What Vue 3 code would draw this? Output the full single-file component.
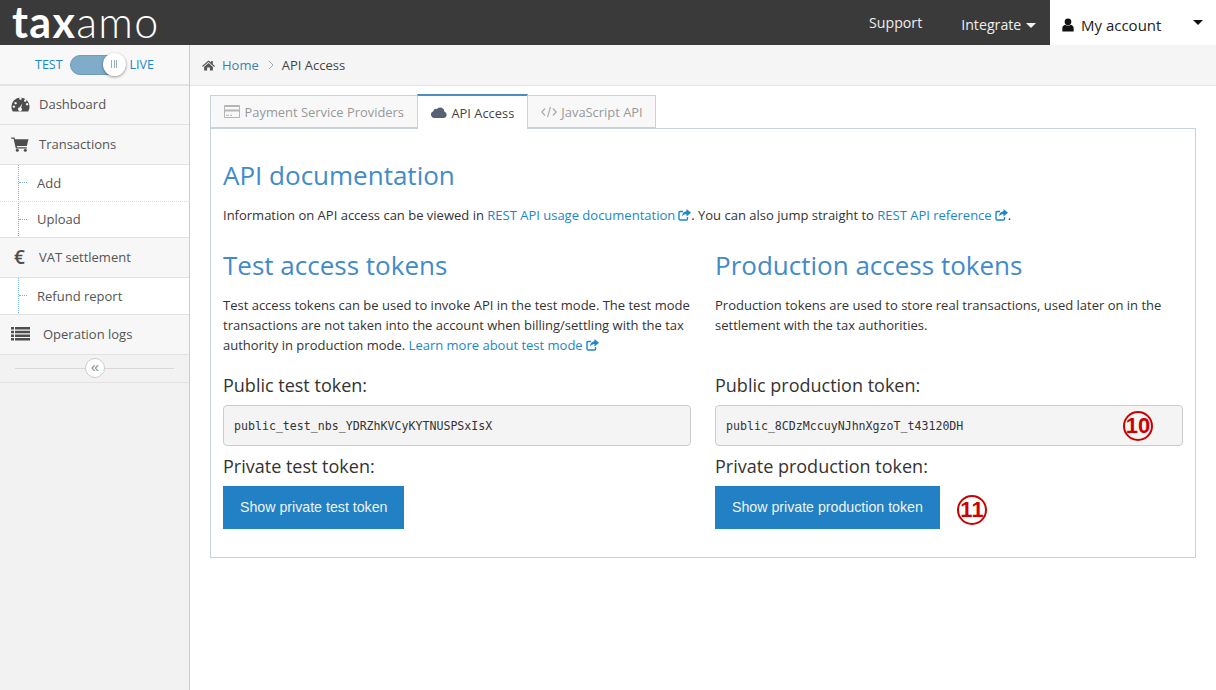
<script setup>
const tabs = [
  { label: 'Payment Service Providers', icon: 'card' },
  { label: 'API Access', icon: 'cloud', active: true },
  { label: 'JavaScript API', icon: 'code' }
]
</script>

<template>
  <div class="page">
    <header class="topbar">
      <div class="logo"><b>tax</b>amo</div>
      <nav class="topnav">
        <a class="support">Support</a>
        <a class="integrate">Integrate <i class="caret"></i></a>
        <div class="account">
          <svg class="user" viewBox="0 0 14 16" width="12" height="14"><circle cx="7" cy="4.2" r="3.9" fill="#111"/><path d="M0.4 15.6V11.5C0.4 9.4 2 8 3.6 7.6 4.6 8.3 5.7 8.7 7 8.7s2.4-.4 3.4-1.1c1.6.4 3.2 1.8 3.2 3.9v4.1z" fill="#111"/></svg>
          <span>My account</span>
          <i class="caret big"></i>
        </div>
      </nav>
    </header>
    <div class="body">
      <aside class="sidebar">
        <div class="mode">
          <span>TEST</span>
          <div class="switch"><div class="knob"><i></i><i></i><i></i></div></div>
          <span>LIVE</span>
        </div>
        <a class="item h39">
          <svg class="ic" viewBox="0 0 20 16" width="19" height="15"><path fill-rule="evenodd" fill="#4d4d4d" d="M10 .5A9.7 9.7 0 0 0 .3 10.2c0 1.900.5 3.700 1.500 5.300h16.400a9.900 9.900 0 0 0 1.500-5.300A9.700 9.700 0 0 0 10 .5zM4.800 5.200a1.300 1.300 0 1 1-.1 0zM9.900 3a1.300 1.300 0 1 1 .2 0zM3 9a1.300 1.300 0 1 1-.1 0zm12-3.900a1.300 1.300 0 1 1 .1 0zM17 9a1.300 1.300 0 1 1 .1 0zM11.800 7 10.700 11.400a2 2 0 1 1-1.500-.4z"/></svg>
          <span>Dashboard</span>
        </a>
        <a class="item h40">
          <svg class="ic" viewBox="0 0 18 16" width="18" height="16"><path fill="#4d4d4d" d="M.2 1.500H3.500L4 3.300H17.500L15.800 10H5.800L6 11.200H15.800V12.500H4.800L2.600 2.800H.2z"/><circle cx="6.300" cy="14.300" r="1.500" fill="#4d4d4d"/><circle cx="14.300" cy="14.300" r="1.500" fill="#4d4d4d"/></svg>
          <span>Transactions</span>
        </a>
        <div class="subs">
          <a class="sub h37"><span>Add</span></a>
          <a class="sub h36 last"><span>Upload</span></a>
        </div>
        <a class="item h40">
          <span class="euro">€</span>
          <span>VAT settlement</span>
        </a>
        <div class="subs">
          <a class="sub h37 last"><span>Refund report</span></a>
        </div>
        <a class="item h40 logs">
          <svg class="ic" viewBox="0 0 19 14" width="19" height="14"><path fill="#4d4d4d" d="M0 0h3v2.500H0zM4 0h15v2.500H4zM0 3.700h3v2.500H0zM4 3.700h15v2.500H4zM0 7.400h3v2.500H0zM4 7.400h15v2.500H4zM0 11.100h3v2.500H0zM4 11.100h15v2.500H4z"/></svg>
          <span>Operation logs</span>
        </a>
        <div class="collapse">
          <div class="round">«</div>
        </div>
      </aside>
      <main class="main">
        <div class="crumbs">
          <svg viewBox="0 0 14 12" width="13" height="11"><path fill="#555" d="M7 .5 0 6.500l.8 1L7 2.200l6.200 5.300.8-1-2.300-2V1h-1.900v1.700zM2.200 7.500V11.500h3.300V8.300h3V11.500h3.300V7.500L7 3.400z"/></svg>
          <a class="home">Home</a>
          <svg class="chev" viewBox="0 0 6 10" width="6" height="10"><path d="M1 1l4 4-4 4" fill="none" stroke="#aaa" stroke-width="1"/></svg>
          <span>API Access</span>
        </div>
        <div class="content">
          <div class="tabs">
            <div v-for="t in tabs" :key="t.label" class="tab" :class="{ active: t.active }">
              <svg v-if="t.icon === 'card'" viewBox="0 0 16 13" width="16" height="13"><path fill-rule="evenodd" fill="#b5b5b5" d="M1 0h14a1 1 0 0 1 1 1v11a1 1 0 0 1-1 1H1a1 1 0 0 1-1-1V1a1 1 0 0 1 1-1zM1 2v2.500h14V2zM1 6.500V12h14V6.500zM2 9.800h3v1H2zM6 9.800h2v1H6z"/></svg>
              <svg v-else-if="t.icon === 'cloud'" viewBox="0 0 16 11" width="16" height="11"><path fill="#546273" d="M3.500 11A3.500 3.500 0 0 1 2.300 4.200 3 3 0 0 1 6 2 4.300 4.300 0 0 1 13.500 4.800 3.200 3.200 0 0 1 12.800 11z"/></svg>
              <svg v-else viewBox="0 0 16 12" width="16" height="12"><path d="M4 2.500.8 6 4 9.500M12 2.500 15.200 6 12 9.500M9.500.8 6.500 11.200" fill="none" stroke="#aaa" stroke-width="1.200"/></svg>
              <span>{{ t.label }}</span>
            </div>
          </div>
          <section class="panel">
            <h1>API documentation</h1>
            <p class="intro">Information on API access can be viewed in <a>REST API usage documentation<svg class="ext" viewBox="0 0 13 12" width="13" height="12"><path fill="none" stroke="#1b87c9" stroke-width="1.400" d="M5 2.500H2.200A1.200 1.200 0 0 0 1 3.700v6.100A1.200 1.200 0 0 0 2.200 11h6.100a1.200 1.200 0 0 0 1.200-1.200V8"/><path fill="#1b87c9" d="M8.500 0 13 3.700 8.500 7.400V5.200C6.500 5.200 5 5.700 4 7.500 4 4.500 6 2.600 8.500 2.300z"/></svg></a>. You can also jump straight to <a>REST API reference<svg class="ext" viewBox="0 0 13 12" width="13" height="12"><path fill="none" stroke="#1b87c9" stroke-width="1.400" d="M5 2.500H2.200A1.200 1.200 0 0 0 1 3.700v6.100A1.200 1.200 0 0 0 2.200 11h6.100a1.200 1.200 0 0 0 1.200-1.200V8"/><path fill="#1b87c9" d="M8.500 0 13 3.700 8.500 7.400V5.200C6.500 5.200 5 5.700 4 7.500 4 4.500 6 2.600 8.500 2.300z"/></svg></a>.</p>
            <div class="cols">
              <div class="col">
                <h2>Test access tokens</h2>
                <p class="desc">Test access tokens can be used to invoke API in the test mode. The test mode transactions are not taken into the account when billing/settling with the tax authority in production mode. <a>Learn more about test mode<svg class="ext" viewBox="0 0 13 12" width="13" height="12"><path fill="none" stroke="#1b87c9" stroke-width="1.400" d="M5 2.500H2.200A1.200 1.200 0 0 0 1 3.700v6.100A1.200 1.200 0 0 0 2.200 11h6.100a1.200 1.200 0 0 0 1.200-1.200V8"/><path fill="#1b87c9" d="M8.500 0 13 3.700 8.500 7.400V5.200C6.500 5.200 5 5.700 4 7.500 4 4.500 6 2.600 8.500 2.300z"/></svg></a></p>
                <h4>Public test token:</h4>
                <pre class="token">public_test_nbs_YDRZhKVCyKYTNUSPSxIsX</pre>
                <h4 class="second">Private test token:</h4>
                <button class="btn">Show private test token</button>
              </div>
              <div class="col">
                <h2>Production access tokens</h2>
                <p class="desc">Production tokens are used to store real transactions, used later on in the settlement with the tax authorities.</p>
                <h4>Public production token:</h4>
                <div class="anchor">
                  <pre class="token">public_8CDzMccuyNJhnXgzoT_t43120DH</pre>
                  <div class="badge b10">10</div>
                </div>
                <h4 class="second">Private production token:</h4>
                <div class="anchor inline">
                  <button class="btn">Show private production token</button>
                  <div class="badge b11">11</div>
                </div>
              </div>
            </div>
          </section>
        </div>
      </main>
    </div>
  </div>
</template>

<style>
html, body { margin: 0; background: #fff; }
</style>

<style scoped>
.page { width: 1216px; height: 690px; overflow: hidden; font-family: "Open Sans", sans-serif; font-size: 13px; color: #333; display: flex; flex-direction: column; }
.topbar { height: 45px; flex: none; background: #3a3a3a; display: flex; justify-content: space-between; }
.logo { font-family: "Lato", sans-serif; font-size: 43px; line-height: 43px; letter-spacing: 1.300px; color: #fff; padding: 0 0 2px 12px; font-weight: 300; }
.logo b { font-weight: 700; }
.topnav { display: flex; align-items: stretch; font-size: 14.200px; color: #eee; }
.support { line-height: 46px; margin-right: 39px; }
.integrate { line-height: 50px; margin-right: 14px; }
.caret { display: inline-block; width: 0; height: 0; margin-left: 1px; border: 5px solid transparent; border-top-color: #f2f2f2; border-bottom: 0; vertical-align: 2px; }
.account { width: 166px; background: #fff; color: #222; display: flex; align-items: center; padding: 4px 0 0 12px; box-sizing: border-box; position: relative; font-size: 15px; }
.account span { margin-left: 7px; }
.caret.big { border-width: 5px; border-top-color: #111; border-bottom: 0; position: absolute; right: 13px; top: 20px; }
.body { flex: 1; display: flex; min-height: 0; }
.sidebar { width: 190px; flex: none; box-sizing: border-box; background: #f2f2f2; border-right: 1px solid #ccc; color: #555; }
.mode { height: 41px; box-sizing: border-box; border-bottom: 2px solid #e3e3e3; background: #f8f8f8; display: flex; align-items: center; justify-content: center; gap: 7px; color: #1b87c9; font-size: 12.500px; }
.switch { width: 56px; height: 20px; box-sizing: border-box; border: 1px solid #6d9cbc; border-radius: 10px; background: #7facc9; position: relative; margin: 0 -3px 0 0; }
.knob { position: absolute; right: -1px; top: -3px; width: 23px; height: 23px; border-radius: 50%; background: #fff; box-shadow: 0 1px 3px rgba(0,0,0,.4); display: flex; align-items: center; justify-content: center; gap: 1.500px; }
.knob i { width: 1px; height: 8px; background: #8fb0c8; }
.item { display: flex; align-items: center; box-sizing: border-box; background: #f7f7f7; border-bottom: 1px solid #e2e2e2; padding-left: 11px; font-size: 13px; padding-bottom: 2px; }
.h39 { height: 39px; }
.h40 { height: 40px; }
.ic { flex: none; margin-right: 10px; }
.h39 .ic { margin-right: 9px; }
.logs .ic { margin-right: 13px; }
.euro { width: 28px; font-size: 19px; font-weight: 600; padding-left: 3px; box-sizing: border-box; color: #4d4d4d; }
.subs { background: #fff; position: relative; }
.subs::before { content: ""; position: absolute; left: 18px; top: 0; bottom: 2px; border-left: 1px dotted #7fb0d6; }
.sub { display: flex; align-items: center; box-sizing: border-box; padding-left: 37px; border-bottom: 1px dotted #ddd; position: relative; font-size: 13px; padding-bottom: 1px; }
.sub::before { content: ""; position: absolute; left: 19px; top: 17px; width: 8px; border-top: 1px dotted #7fb0d6; }
.sub.last { border-bottom: 1px solid #e2e2e2; }
.h37 { height: 37px; }
.h36 { height: 36px; }
.collapse { height: 28px; box-sizing: border-box; border-bottom: 1px solid #e2e2e2; position: relative; display: flex; align-items: center; justify-content: center; }
.collapse::before { content: ""; position: absolute; left: 15px; right: 15px; top: 13px; border-top: 1px solid #d8d8d8; }
.round { position: relative; width: 20px; height: 20px; box-sizing: border-box; border-radius: 50%; border: 1px solid #ccc; background: #fff; text-align: center; color: #888; font-size: 15px; line-height: 16px; margin: -1px 0 0 1px; font-family: "Liberation Sans", sans-serif; }
.main { flex: 1; min-width: 0; }
.crumbs { height: 41px; box-sizing: border-box; background: #f5f5f5; border-bottom: 1px solid #e4e4e4; display: flex; align-items: center; padding-left: 12px; font-size: 13px; color: #444; }
.home { color: #3f7fae; margin-left: 7px; }
.chev { margin: 0 8px 0 9px; }
.content { padding: 9px 20px 0; }
.tabs { display: flex; height: 34px; position: relative; z-index: 1; }
.tab { height: 33px; box-sizing: border-box; border: 1px solid #c6d2de; background: #f8f8f8; color: #999; display: flex; align-items: center; gap: 4.500px; padding: 0 13px; margin-right: -1px; font-size: 12.900px; }
.tab:last-child { padding-right: 12px; }
.tab.active { background: #fff; color: #444; border-top: 2px solid #4a8fc0; border-bottom: 0; margin-top: -1px; height: 35px; padding-right: 12.500px; }
.panel { margin-top: -1px; border: 1px solid #c6d2de; padding: 0 12px; height: 430px; box-sizing: border-box; width: 986px; }
h1 { margin: 28px 0 0; font-size: 26px; line-height: 37px; font-weight: 400; color: #428bca; }
.intro { margin: 11px 0 0; line-height: 20px; }
a { color: inherit; }
p a { color: #1b87c9; }
.ext { margin-left: 3px; vertical-align: -1px; }
.cols { display: grid; grid-template-columns: 468px 468px; column-gap: 24px; margin-top: 22px; }
h2 { margin: 0; font-size: 26px; line-height: 37px; font-weight: 400; color: #428bca; }
.desc { margin: 11px 0 0; line-height: 20px; height: 60px; }
h4 { margin: 18px 0 0; font-size: 18px; line-height: 25px; font-weight: 400; color: #333; }
h4.second { margin-top: 8px; }
.token { margin: 7px 0 0; height: 41px; box-sizing: border-box; background: #f4f4f4; border: 1px solid #ccc; border-radius: 4px; padding: 0 10px; line-height: 40px; font-family: "DejaVu Sans Mono", monospace; font-size: 11.600px; color: #333; }
.btn { display: block; margin-top: 7px; height: 43px; padding: 0 17px 2px; background: #2181c4; color: #f2f2f2; border: 0; font-family: "Liberation Sans", sans-serif; font-size: 14.200px; }
.anchor { position: relative; }
.inline { width: fit-content; }
.badge { position: absolute; width: 30px; height: 30px; box-sizing: border-box; border: 2.500px solid #c00; border-radius: 50%; color: #c00; font-family: "Liberation Sans", sans-serif; font-weight: 700; font-size: 22px; line-height: 25px; text-align: center; background: transparent; }
.b10 { left: 408px; top: 6px; }
.b11 { left: 242px; top: 9px; }
</style>
